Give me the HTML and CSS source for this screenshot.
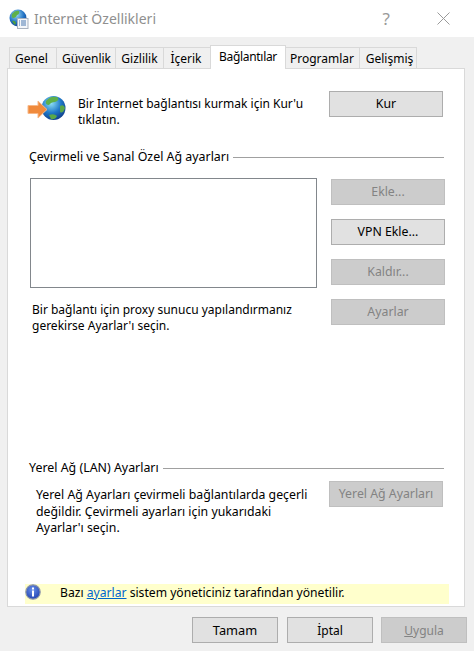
FILE: index.html
```html
<!DOCTYPE html>
<html lang="tr">
<head>
  <meta charset="UTF-8">
  <title>Internet Özellikleri</title>
  <link rel="stylesheet" href="styles.css">
</head>
<body>
  <div class="titlebar">
    <svg class="title-icon" width="20" height="20" viewBox="0 0 20 20">
      <defs>
        <radialGradient id="globeA" cx="40%" cy="30%" r="75%">
          <stop offset="0" stop-color="#9fdcf5"/>
          <stop offset="0.6" stop-color="#2272c4"/>
          <stop offset="1" stop-color="#123f8c"/>
        </radialGradient>
      </defs>
      <circle cx="9" cy="9" r="8.5" fill="url(#globeA)"/>
      <path d="M3 5 Q6 1 10 2 Q11 5 8 6 Q7 9 4 9 Q2 8 3 5Z" fill="#5fb04a"/>
      <path d="M3 12 Q6 11 7 14 Q6 17 5 15Z" fill="#4f9f3f"/>
      <rect x="8.5" y="9.5" width="10.5" height="10" fill="#f4f6fa" stroke="#a9b2c0"/>
      <path d="M10 12h1M12 12h5M10 14h1M12 14h5M10 16h1M12 16h5" stroke="#4a78b0"/>
    </svg>
    <span class="title-text">Internet Özellikleri</span>
    <span class="title-help">?</span>
    <svg class="title-close" width="13" height="13" viewBox="0 0 13 13">
      <path d="M0.5 0.5L12.5 12.5M12.5 0.5L0.5 12.5" stroke="#9a9a9a" fill="none"/>
    </svg>
  </div>

  <div class="tabs">
    <div class="tab tab-genel">Genel</div>
    <div class="tab tab-guvenlik">Güvenlik</div>
    <div class="tab tab-gizlilik">Gizlilik</div>
    <div class="tab tab-icerik">İçerik</div>
    <div class="tab tab-active">Bağlantılar</div>
    <div class="tab tab-programlar">Programlar</div>
    <div class="tab tab-gelismis">Gelişmiş</div>
  </div>

  <div class="panel">
    <div class="setup-row">
      <svg class="setup-icon" width="40" height="26" viewBox="0 0 40 26">
        <defs>
          <radialGradient id="globeB" cx="40%" cy="30%" r="75%">
            <stop offset="0" stop-color="#8fe0f5"/>
            <stop offset="0.55" stop-color="#1f78c8"/>
            <stop offset="1" stop-color="#0f3a86"/>
          </radialGradient>
        </defs>
        <circle cx="27.5" cy="13" r="12" fill="url(#globeB)"/>
        <path d="M20 6 Q25 0 32 2.5 Q33 6 29 7 Q25 7 23 10 Q19 10 20 6Z" fill="#5fb04a"/>
        <path d="M23 20 Q28 18 31 21 Q29 25 25 24Z" fill="#5aa848"/>
        <path d="M34 11 Q38 9 39 13 Q37 19 34 17Z" fill="#5aa848"/>
        <path d="M2 10.5h10V6l9 8.5-9 8.5v-4.5H2Z" fill="#f08a3c" stroke="#f7b98a"/>
      </svg>
      <div class="setup-text">Bir Internet bağlantısı kurmak için Kur'u<br>tıklatın.</div>
      <button class="btn">Kur</button>
    </div>

    <div class="group-head group-vpn"><span>Çevirmeli ve Sanal Özel Ağ ayarları</span><i></i></div>

    <div class="vpn-row">
      <div class="listbox"></div>
      <div class="vpn-buttons">
        <button class="btn off">Ekle...</button>
        <button class="btn">VPN Ekle...</button>
        <button class="btn off">Kaldır...</button>
      </div>
    </div>

    <div class="proxy-row">
      <div class="proxy-text">Bir bağlantı için proxy sunucu yapılandırmanız<br>gerekirse Ayarlar'ı seçin.</div>
      <button class="btn off">Ayarlar</button>
    </div>

    <div class="group-head group-lan"><span>Yerel Ağ (LAN) Ayarları</span><i></i></div>

    <div class="lan-row">
      <div class="lan-text">Yerel Ağ Ayarları çevirmeli bağlantılarda geçerli<br>değildir. Çevirmeli ayarları için yukarıdaki<br>Ayarlar'ı seçin.</div>
      <button class="btn off">Yerel Ağ Ayarları</button>
    </div>

    <div class="notice">
      <svg class="notice-icon" width="16" height="16" viewBox="0 0 16 16">
        <defs>
          <radialGradient id="infoBg" cx="45%" cy="35%" r="70%">
            <stop offset="0" stop-color="#6a90e8"/>
            <stop offset="1" stop-color="#1c3fb0"/>
          </radialGradient>
        </defs>
        <circle cx="8" cy="8" r="7.2" fill="url(#infoBg)" stroke="#8d95a8" stroke-width="1.2"/>
        <rect x="7" y="3.5" width="2" height="2" fill="#fff"/>
        <rect x="7" y="6.5" width="2" height="6" fill="#fff"/>
      </svg>
      <span class="notice-text">Bazı <a href="#">ayarlar</a> sistem yöneticiniz tarafından yönetilir.</span>
    </div>
  </div>

  <div class="footer">
    <button class="btn btn-ok">Tamam</button>
    <button class="btn">İptal</button>
    <button class="btn off"><u>U</u>ygula</button>
  </div>
</body>
</html>
```

FILE: styles.css
```css
html, body {
  margin: 0;
  padding: 0;
}

body {
  width: 474px;
  height: 651px;
  overflow: hidden;
  background: #f0f0f0;
  font-family: "Noto Sans", "Open Sans", sans-serif;
  font-size: 12px;
  color: #000;
}

/* title bar */
.titlebar {
  height: 37px;
  background: #fff;
  display: flex;
  align-items: center;
  padding: 0 24px 0 9px;
}

.title-icon {
  margin-right: 5px;
}

.title-text {
  flex: 1;
  font-size: 14px;
  color: #8f8f8f;
}

.title-help {
  font-size: 17px;
  color: #9a9a9a;
  margin-right: 47px;
}

/* tabs */
.tabs {
  display: flex;
  align-items: flex-end;
  height: 31px;
  padding-left: 9px;
}

.tab {
  box-sizing: border-box;
  height: 21px;
  line-height: 22px;
  text-align: center;
  border-top: 1px solid #d9d9d9;
  border-right: 1px solid #d9d9d9;
}

.tab-genel { width: 48px; padding-right: 3px; border-left: 1px solid #d9d9d9; }
.tab-guvenlik { width: 59px; padding-left: 1px; }
.tab-gizlilik { width: 48px; }
.tab-icerik { width: 46px; padding-right: 2px; border-right: none; }
.tab-programlar { width: 74px; padding-right: 1px; }
.tab-gelismis { width: 57px; padding-left: 3px; }

.tab-active {
  width: 76px;
  height: 24px;
  line-height: 21px;
  letter-spacing: -0.3px;
  background: #fff;
  margin-bottom: -1px;
  border-left: 1px solid #d9d9d9;
  position: relative;
  z-index: 1;
}

/* main panel */
.panel {
  margin: 0 9px 0 7px;
  height: 537px;
  background: #fff;
  border: 1px solid #d9d9d9;
  position: relative;
  line-height: 16px;
}

.setup-row {
  display: flex;
  align-items: flex-start;
  height: 26px;
  padding: 22px 21px 0 18px;
}

.setup-icon {
  margin: 4px 12px 0 0;
}

.setup-text {
  flex: 1;
  margin-top: 5px;
}

.btn {
  width: 114px;
  height: 26px;
  padding: 0;
  border: 1px solid #adadad;
  background: #e1e1e1;
  color: #000;
  font: inherit;
  font-size: 12.3px;
}

.btn.off {
  background: #cccccc;
  border-color: #bfbfbf;
  color: #838383;
}

.group-head {
  display: flex;
  align-items: center;
  padding: 0 20px 0 21px;
  font-size: 12.4px;
}

.group-head i {
  flex: 1;
  height: 1px;
  margin-left: 4px;
  background: #a0a0a0;
}

.group-vpn {
  margin-top: 32px;
}

.vpn-row {
  display: flex;
  justify-content: space-between;
  padding: 13px 19px 0 22px;
}

.listbox {
  width: 285px;
  height: 108px;
  border: 1px solid #82878c;
}

.vpn-buttons {
  display: flex;
  flex-direction: column;
  gap: 14px;
  padding-top: 1px;
}

.proxy-row {
  display: flex;
  justify-content: space-between;
  align-items: flex-start;
  height: 35px;
  padding: 11px 19px 0 24px;
}

.proxy-text {
  margin-top: 3px;
}

.group-lan {
  margin-top: 126px;
}

.lan-row {
  display: flex;
  justify-content: space-between;
  align-items: flex-start;
  padding: 5px 21px 0 28px;
}

.lan-text {
  margin-top: 6px;
  font-size: 12.3px;
  line-height: 16.5px;
}

.notice {
  position: absolute;
  left: 17px;
  right: 15px;
  bottom: 2px;
  height: 20px;
  background: #ffffcc;
  display: flex;
  align-items: flex-start;
  font-size: 12.15px;
}

.notice-icon {
  margin-right: 19px;
}

.notice-text {
  margin-top: 1px;
}

.notice a {
  color: #0066cc;
}

/* dialog buttons */
.footer {
  display: flex;
  justify-content: flex-end;
  gap: 8px;
  padding: 10px 7px 0 0;
}

.footer .btn {
  width: 86px;
  font-size: 12px;
}

.footer .btn-ok {
  margin-right: 1px;
  font-size: 12.8px;
}
```
